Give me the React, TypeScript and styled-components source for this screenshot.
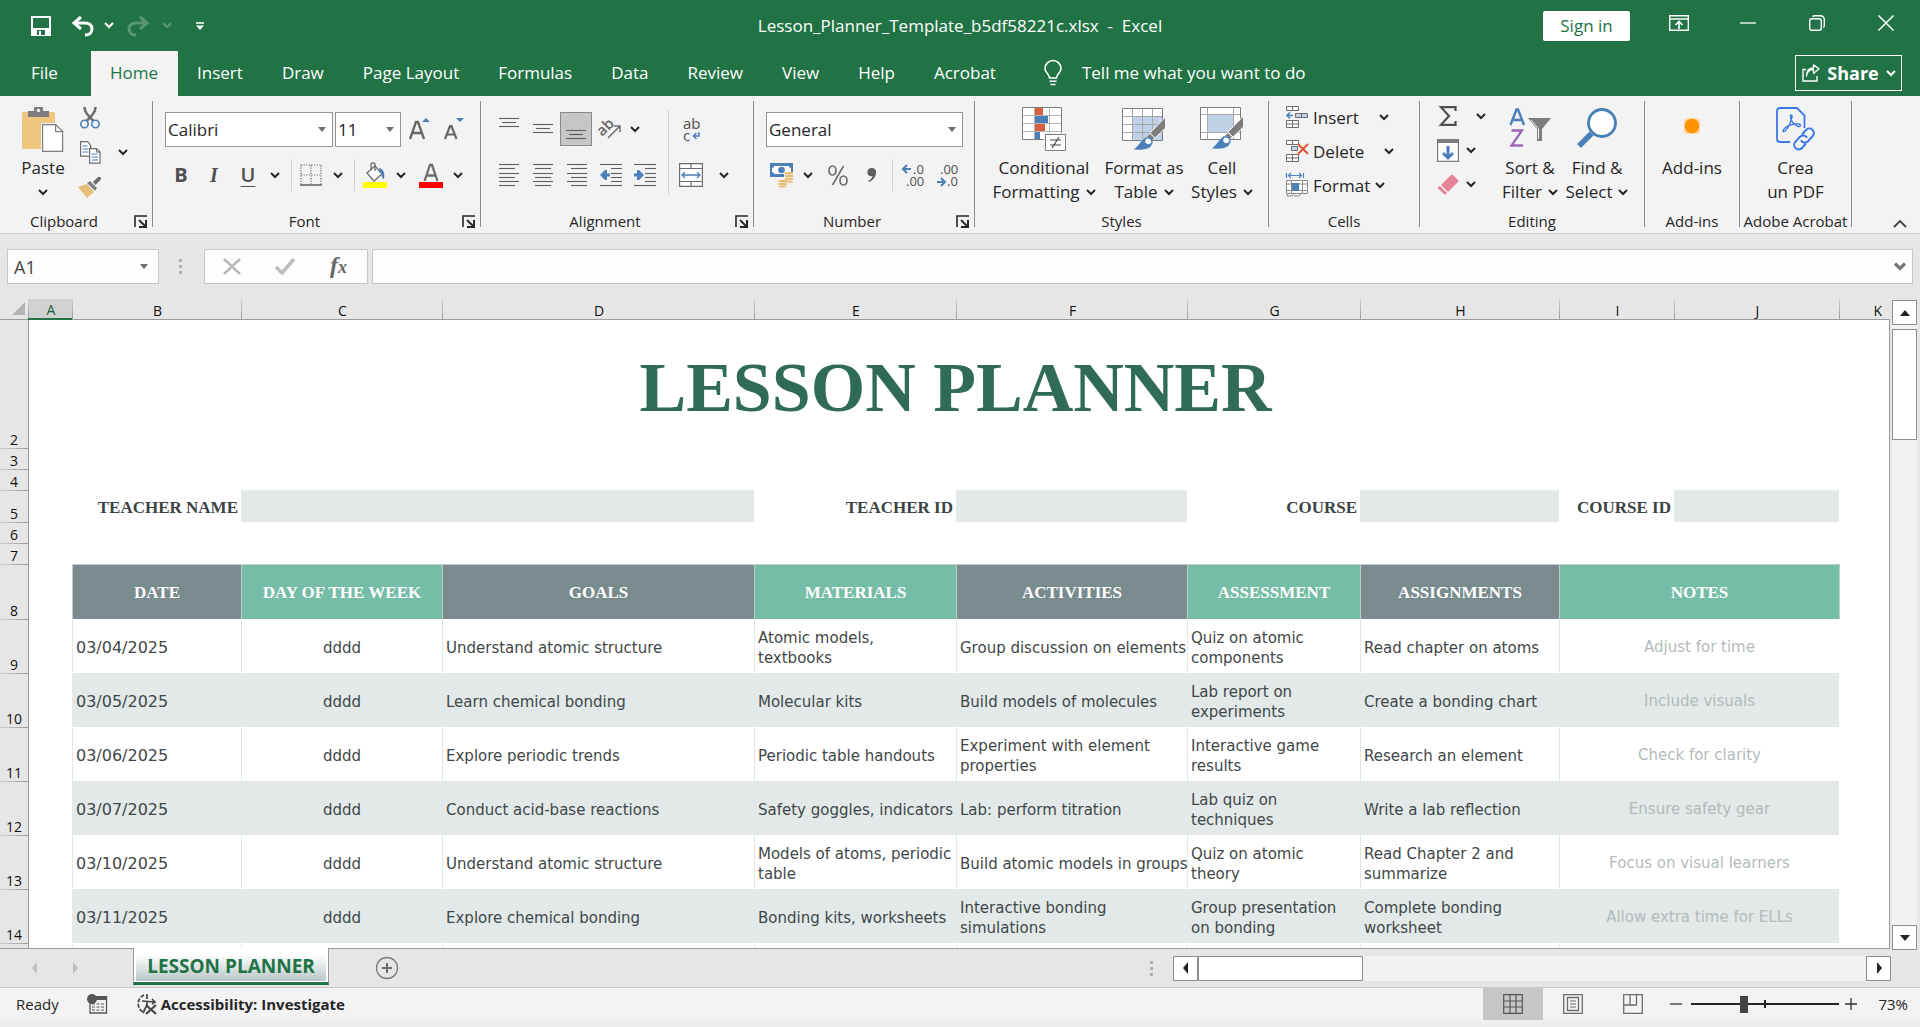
import React from "react";
import styled, { createGlobalStyle, css } from "styled-components";

const UI = `"Open Sans", "Noto Sans", sans-serif`;
const GREEN = "#217346";
const GREY = "#6d6d6d";
const BLUE = "#4a7fb8";

const GlobalStyle = createGlobalStyle`
  *, *::before, *::after { box-sizing: border-box; }
  html, body { margin: 0; padding: 0; overflow: hidden; }
  body { font-family: ${UI}; color: #262626; background: #e6e6e6; }
  button, input, select { font-family: inherit; color: inherit; margin: 0; }
  svg { display: block; flex: none; overflow: visible; }
`;

const Window = styled.div`
  display: flex;
  flex-direction: column;
  height: 100vh;
`;

/* ---------- title bar ---------- */

const TitleBar = styled.header`
  display: grid;
  grid-template-columns: 1fr auto 1fr;
  height: 51px;
  background: ${GREEN};
  color: #fff;
`;

const QuickAccess = styled.div`
  display: flex;
  align-items: center;
  padding-left: 20px;
`;

const PlainButton = styled.button<{ $w?: number; $dim?: boolean }>`
  display: flex;
  align-items: center;
  justify-content: center;
  flex: none;
  width: ${(p) => (p.$w ? `${p.$w}px` : "auto")};
  height: 34px;
  padding: 0;
  border: 0;
  background: none;
  opacity: ${(p) => (p.$dim ? 0.25 : 1)};
`;

const DocTitle = styled.h1`
  margin: 0;
  font-size: 17px;
  font-weight: 400;
  line-height: 51px;
  white-space: pre;
`;

const WindowActions = styled.div`
  display: flex;
  align-items: center;
  justify-content: flex-end;
`;

const WindowButton = styled(PlainButton)`
  width: 69px;
  height: 46px;
  align-self: flex-start;
`;

const SignIn = styled.button`
  width: 87px;
  height: 30px;
  margin-right: 14px;
  padding: 0;
  border: 0;
  border-radius: 2px;
  background: #fff;
  color: ${GREEN};
  font-size: 17px;
  line-height: 30px;
`;

/* ---------- ribbon tabs ---------- */

const TabBar = styled.nav`
  display: flex;
  height: 45px;
  background: ${GREEN};
  color: #fff;
`;

const RibbonTab = styled.button<{ $active?: boolean; $file?: boolean }>`
  padding: 0 20px 2px 19px;
  border: 0;
  background: ${(p) => (p.$active ? "#f3f3f3" : "none")};
  color: ${(p) => (p.$active ? GREEN : "#fff")};
  font-size: 17px;
  white-space: nowrap;
  ${(p) => p.$file && css`width: 91px; padding-left: 31px; text-align: left;`}
`;

const TellMe = styled.button`
  display: flex;
  align-items: center;
  gap: 20px;
  padding: 0 0 2px 28px;
  border: 0;
  background: none;
  font-size: 17px;
  white-space: nowrap;
`;

const Share = styled.button`
  display: flex;
  align-items: center;
  justify-content: space-between;
  width: 107px;
  height: 36px;
  margin: 4px 18px 0 auto;
  padding: 0 5px 0 6px;
  border: 1px solid #fff;
  background: none;
  font-size: 18px;
  font-weight: 700;
`;

/* ---------- ribbon ---------- */

const Ribbon = styled.div`
  display: flex;
  height: 138px;
  flex: none;
  background: #f3f3f3;
  border-bottom: 1px solid #d0d0d0;
`;

const GroupBox = styled.section<{ $w: number }>`
  display: flex;
  flex-direction: column;
  width: ${(p) => p.$w}px;
  flex: none;
`;

const GroupBody = styled.div<{ $pad?: number }>`
  display: flex;
  flex: 1;
  padding-left: ${(p) => p.$pad ?? 0}px;
`;

const GroupFooter = styled.footer`
  display: flex;
  align-items: center;
  height: 22px;
  margin-bottom: 1px;
  font-size: 15px;
  white-space: nowrap;
`;

const GroupLabel = styled.span`
  flex: 1;
  text-align: center;
`;

const Divider = styled.div`
  width: 1px;
  margin: 5px 0 6px;
  background: #8a8a8a;
  flex: none;
`;

const ThinRule = styled.div<{ $h?: number; $m?: string }>`
  width: 1px;
  height: ${(p) => p.$h ?? 32}px;
  margin: ${(p) => p.$m ?? "0 6px"};
  background: #d0d0d0;
  flex: none;
`;

const Stack = styled.div<{ $top?: number; $gap?: number }>`
  display: flex;
  flex-direction: column;
  padding-top: ${(p) => p.$top ?? 16}px;
  gap: ${(p) => p.$gap ?? 12}px;
`;

const Line = styled.div<{ $gap?: number }>`
  display: flex;
  align-items: center;
  height: 34px;
  gap: ${(p) => p.$gap ?? 0}px;
`;

const Tool = styled(PlainButton)<{ $on?: boolean }>`
  ${(p) => p.$on && css`background: #c6c6c6; border: 1px solid #8a8a8a;`}
`;

const Glyph = styled.span<{ $style: "bold" | "italic" | "underline" }>`
  color: #505050;
  font-size: 20px;
  line-height: 24px;
  font-weight: ${(p) => (p.$style === "underline" ? 600 : 700)};
  font-style: ${(p) => (p.$style === "italic" ? "italic" : "normal")};
  font-family: ${(p) => (p.$style === "italic" ? `"Liberation Serif", serif` : UI)};
  text-decoration: ${(p) => (p.$style === "underline" ? "underline" : "none")};
  text-underline-offset: 4px;
  text-decoration-thickness: 1px;
`;

const BigButton = styled.button<{ $w: number }>`
  display: flex;
  flex-direction: column;
  align-items: center;
  flex: none;
  width: ${(p) => p.$w}px;
  padding: 0;
  border: 0;
  background: none;
  font-size: 17px;
  line-height: 24px;
  white-space: nowrap;
`;

const BigIcon = styled.span`
  display: flex;
  align-items: center;
  justify-content: center;
  height: 60px;
  padding-top: 6px;
`;

const BigLine = styled.span`
  display: flex;
  align-items: center;
  height: 24px;
  gap: 6px;
`;

const CellsTool = styled.button<{ $gap: number }>`
  display: flex;
  align-items: center;
  height: 34px;
  padding: 0;
  border: 0;
  background: none;
  font-size: 17px;
  gap: 5px;
  & > span { padding-right: ${(p) => p.$gap}px; }
`;

const Picker = styled.label<{ $w: number }>`
  display: grid;
  grid-template-columns: 1fr 20px;
  align-items: center;
  width: ${(p) => p.$w}px;
  height: 35px;
  border: 1px solid #949494;
  background: #fff;
  & > select {
    grid-area: 1 / 1 / 2 / 3;
    width: 100%;
    height: 33px;
    padding: 1px 0 0 2px;
    border: 0;
    background: none;
    appearance: none;
    font-size: 17px;
  }
  & > svg { grid-area: 1 / 2; justify-self: center; pointer-events: none; }
`;

const Collapse = styled(PlainButton)`
  align-self: flex-end;
  margin: 0 13px 3px auto;
  height: 14px;
`;

/* ---------- formula bar ---------- */

const FormulaBar = styled.div`
  display: flex;
  height: 65px;
  flex: none;
  padding: 15px 7px;
  background: #e6e6e6;
`;

const BarBox = styled.div<{ $w?: number; $pad?: string }>`
  display: flex;
  align-items: center;
  justify-content: space-between;
  flex: ${(p) => (p.$w ? "none" : 1)};
  width: ${(p) => (p.$w ? `${p.$w}px` : "auto")};
  height: 35px;
  padding: ${(p) => p.$pad ?? "0 9px 0 6px"};
  border: 1px solid #c6c6c6;
  background: #fdfdfd;
  color: #444;
  & + & { margin-left: 4px; }
`;

const BarInput = styled.input`
  flex: 1;
  min-width: 0;
  height: 33px;
  padding: 0;
  border: 0;
  background: none;
  font-size: 18px;
  outline: 0;
`;

const Dots = styled.div<{ $m: string }>`
  width: 3px;
  height: 15px;
  margin: ${(p) => p.$m};
  background: repeating-linear-gradient(#b0b0b0 0 3px, transparent 3px 6px);
`;

/* ---------- worksheet ---------- */

const Workspace = styled.main`
  display: flex;
  flex: 1;
  min-height: 0;
`;

const SheetArea = styled.div`
  flex: 1;
  min-width: 0;
  overflow: hidden;
  background: #fff;
`;

const Grid = styled.table`
  width: 100%;
  table-layout: fixed;
  border-collapse: separate;
  border-spacing: 0;
`;

const ColHead = styled.th<{ $selected?: boolean; $last?: boolean }>`
  height: 21px;
  padding: ${(p) => (p.$last ? "2px 8px 0 0" : "2px 0 0 2px")};
  text-align: ${(p) => (p.$last ? "right" : "center")};
  font-size: 14px;
  font-weight: 400;
  line-height: 17px;
  color: ${(p) => (p.$selected ? "#1b5e38" : "#111")};
  border-bottom: ${(p) => (p.$selected ? `2px solid ${GREEN}` : "1px solid #9b9b9b")};
  background: linear-gradient(#d2d2d2, #9b9b9b) left / 1px 100% no-repeat,
    ${(p) => (p.$selected ? "#d2d2d2" : "#e6e6e6")};
`;

const Corner = styled.th`
  padding: 0 3px 2px 12px;
  border-bottom: 1px solid #9b9b9b;
  background: #e6e6e6;
`;

const Row = styled.tr<{ $h: number; $band?: boolean }>`
  height: ${(p) => p.$h}px;
  --fill: ${(p) => (p.$band ? "#e2e9e8" : "#fff")};
`;

const RowHead = styled.th<{ $first?: boolean }>`
  padding: 0;
  vertical-align: bottom;
  font-size: 14px;
  font-weight: 400;
  line-height: 17px;
  color: #111;
  background: ${(p) =>
    p.$first ? "#e6e6e6" : "linear-gradient(90deg, #cfcfcf, #9b9b9b) top / 100% 1px no-repeat, #e6e6e6"};
`;

const Blank = styled.td<{ $edge?: "left" | "right"; $fill?: boolean }>`
  padding: 0;
  background: ${(p) => (p.$fill ? "#e2e9e8" : "#fff")};
  ${(p) => p.$edge && css`border-${p.$edge}: 1px solid #9b9b9b;`}
`;

const SheetTitle = styled.td`
  padding: 8px 0 0;
  text-align: center;
  font: 700 70px/80px "Liberation Serif", serif;
  color: #306a59;
`;

const FieldLabel = styled.td`
  padding: 4px 3px 0 0;
  text-align: right;
  font: 700 17px/20px "Liberation Serif", serif;
  color: #3b4444;
  white-space: nowrap;
`;

const HeadCell = styled.th<{ $teal?: boolean }>`
  padding: 2px 0 0;
  border-top: 1px solid #c3cccc;
  border-left: 1px solid #c3cccc;
  background: ${(p) => (p.$teal ? "#75bda7" : "#7a8b8d")};
  color: #fff;
  font: 700 17px/20px "Liberation Serif", serif;
  white-space: nowrap;
`;

const HeadEnd = styled(Blank)`
  border-left: 1px solid #c3cccc;
`;

const Cell = styled.td<{ $kind?: "date" | "center" | "note" }>`
  padding: ${(p) => (p.$kind === "note" ? "2px 0 0" : p.$kind === "center" ? "4px 0 0" : "4px 0 0 3px")};
  border-left: 1px solid #e2e8e7;
  background: var(--fill);
  font-family: "DejaVu Sans", Verdana, sans-serif;
  font-size: ${(p) => (p.$kind === "date" ? 16 : 15)}px;
  line-height: 20px;
  color: ${(p) => (p.$kind === "note" ? "#b3bbbb" : "#3f4748")};
  text-align: ${(p) => (p.$kind === "center" || p.$kind === "note" ? "center" : "left")};
  white-space: pre;
`;

/* ---------- scroll bars ---------- */

const VScroll = styled.div`
  display: flex;
  flex-direction: column;
  position: relative;
  z-index: 1;
  width: 30px;
  flex: none;
  margin-bottom: -2px;
  padding: 1px 3px 0 2px;
  background: #e6e6e6;
`;

const Trough = styled.div<{ $row?: boolean }>`
  flex: 1;
  display: flex;
  padding: ${(p) => (p.$row ? "0" : "4px 0 0")};
  background: #f2f2f2;
`;

const Thumb = styled.div<{ $w: number; $h: number }>`
  width: ${(p) => p.$w}px;
  height: ${(p) => p.$h}px;
  background: #fff;
  border: 1px solid #8f8f8f;
`;

const ScrollButton = styled(PlainButton)`
  width: 25px;
  height: 25px;
  background: #fff;
  border: 1px solid #8f8f8f;
`;

/* ---------- sheet tabs ---------- */

const SheetBar = styled.div`
  display: flex;
  height: 40px;
  flex: none;
  background: #e6e6e6;
  border-top: 1px solid #9b9b9b;
  border-bottom: 1px solid #c6c6c6;
`;

const SheetNav = styled.div`
  display: flex;
  align-items: center;
  width: 133px;
  padding-left: 15px;
`;

const SheetTab = styled.button`
  width: 196px;
  height: 37px;
  margin-top: -1px;
  padding: 0 2px 1px;
  border: 1px solid #9b9b9b;
  border-top: 0;
  border-bottom: 3px solid ${GREEN};
  background: linear-gradient(#fff 20%, #b9c6c7) content-box, #fff;
  color: ${GREEN};
  font-size: 19px;
  font-weight: 700;
  line-height: 33px;
  white-space: nowrap;
  & > span { display: block; padding-top: 3px; line-height: 30px; }
`;

const AddSheet = styled(PlainButton)`
  height: 38px;
  margin-left: 46px;
`;

const HScroll = styled.div`
  display: flex;
  align-items: center;
  margin: 0 29px 0 auto;
  width: 741px;
`;

const HTrack = styled.div`
  display: flex;
  flex: 1;
  height: 25px;
`;

/* ---------- status bar ---------- */

const StatusBar = styled.footer`
  display: flex;
  align-items: center;
  height: 32px;
  flex: none;
  padding: 0 12px 0 16px;
  background: #f3f3f3;
  font-size: 15px;
`;

const StatusButton = styled.button`
  display: flex;
  align-items: center;
  gap: 3px;
  margin-left: 28px;
  padding: 0;
  border: 0;
  background: none;
  font-size: 15px;
  font-weight: 700;
`;

const ViewButtons = styled.div`
  display: flex;
  margin-left: auto;
`;

const ViewButton = styled(PlainButton)<{ $on?: boolean }>`
  width: 60px;
  height: 32px;
  background: ${(p) => (p.$on ? "#c6c6c6" : "none")};
`;

const Zoom = styled.div`
  display: flex;
  align-items: center;
  padding-left: 1px;
`;

const ZoomRange = styled.input`
  appearance: none;
  width: 148px;
  height: 18px;
  margin-left: 3px;
  background: linear-gradient(#262626, #262626) 50% 50% / 2px 8px no-repeat,
    linear-gradient(#262626, #262626) center / 100% 2px no-repeat;
  &::-webkit-slider-thumb {
    appearance: none;
    width: 8px;
    height: 17px;
    background: #444;
  }
`;

const ZoomValue = styled.span`
  width: 45px;
  text-align: right;
`;

const BottomEdge = styled.div`
  height: 7px;
  flex: none;
  background: #eee;
`;

/* ---------- icons ---------- */

type IcoProps = { w: number; h: number; children: React.ReactNode };
const Ico = ({ w, h, children }: IcoProps) => (
  <svg width={w} height={h} viewBox={`0 0 ${w} ${h}`} fill="none" aria-hidden="true">
    {children}
  </svg>
);

const Chevron = ({ color = "#262626" }: { color?: string }) => (
  <Ico w={10} h={7}>
    <path d="M1 1l4 4 4-4" stroke={color} strokeWidth="2" />
  </Ico>
);

const Caret = () => (
  <Ico w={9} h={5}>
    <path d="M0 0h8L4 5z" fill="#6d6d6d" />
  </Ico>
);

const Arrow = ({ dir, color = "#222" }: { dir: "up" | "down" | "left" | "right"; color?: string }) => {
  const shapes = {
    up: "M1 9l5-6 5 6z",
    down: "M1 3h10L6 9z",
    left: "M8 0v12L3 6z",
    right: "M4 0v12l5-6z",
  };
  return (
    <Ico w={12} h={12}>
      <path d={shapes[dir]} fill={color} />
    </Ico>
  );
};

const Launcher = () => (
  <Ico w={13} h={13}>
    <path d="M1 12V1h12" stroke="#262626" strokeWidth="1.6" />
    <path d="M5 5l6 6" stroke="#262626" strokeWidth="1.8" />
    <path d="M12 5v7H5" stroke="#262626" strokeWidth="2" />
  </Ico>
);

const SaveIcon = () => (
  <Ico w={20} h={20}>
    <path d="M1 1h18v18H1z" stroke="#fff" strokeWidth="2" />
    <path d="M1 12h18v7H1z" fill="#fff" />
    <path d="M6 14h8v5H6z" fill={GREEN} />
    <path d="M8 15h2v4H8z" fill="#fff" />
  </Ico>
);

const UndoIcon = () => (
  <Ico w={22} h={20}>
    <path d="M9 1L2 7l7 6" stroke="#fff" strokeWidth="3" />
    <path d="M3 7h10c4 0 7 2 7 6s-3 6-7 6" stroke="#fff" strokeWidth="3" />
  </Ico>
);

const RedoIcon = () => (
  <Ico w={22} h={20}>
    <path d="M13 1l7 6-7 6" stroke="#fff" strokeWidth="3" />
    <path d="M19 7H9c-4 0-7 2-7 6s3 6 7 6" stroke="#fff" strokeWidth="3" />
  </Ico>
);

const CustomizeIcon = () => (
  <Ico w={8} h={8}>
    <path d="M0 1h8" stroke="#fff" strokeWidth="1.5" />
    <path d="M0 3.500h8L4 8z" fill="#fff" />
  </Ico>
);

const RibbonOptionsIcon = () => (
  <Ico w={20} h={16}>
    <path d="M.7.7h18.600v14.600H.7zM1 4h18" stroke="#fff" strokeWidth="1.4" />
    <path d="M10 14V7M6.500 10L10 6.500l3.500 3.500" stroke="#fff" strokeWidth="1.6" />
  </Ico>
);

const MinimizeIcon = () => (
  <Ico w={16} h={2}>
    <path d="M0 1h16" stroke="#fff" strokeWidth="1.3" />
  </Ico>
);

const RestoreIcon = () => (
  <Ico w={16} h={16}>
    <rect x=".7" y="3.7" width="11.6" height="11.6" rx="2" stroke="#fff" strokeWidth="1.4" />
    <path d="M3.500 1.500C4 1 4.500.7 5.500.7h6a3.800 3.800 0 013.800 3.800v6c0 1-.3 1.500-.8 2" stroke="#fff" strokeWidth="1.4" />
  </Ico>
);

const CloseIcon = () => (
  <Ico w={16} h={16}>
    <path d="M.5.5l15 15M15.500.5l-15 15" stroke="#fff" strokeWidth="1.5" />
  </Ico>
);

const BulbIcon = () => (
  <Ico w={18} h={26}>
    <path d="M5.500 18c0-4-4.500-5-4.500-9.500a8 8 0 0116 0c0 4.500-4.500 5.500-4.500 9.500z" stroke="#fff" strokeWidth="1.6" />
    <path d="M5.500 21.200h7M6.500 24.500h5" stroke="#fff" strokeWidth="1.6" />
  </Ico>
);

const ShareIcon = () => (
  <Ico w={18} h={18}>
    <path d="M4 5.500H1V17h14v-5" stroke="#fff" strokeWidth="1.4" />
    <path d="M4.500 12c.5-4 3-6.500 7-6.500V9.500L17 4.800 11.500.9v3C7 4 4.500 7 4.500 12z" stroke="#fff" strokeWidth="1.3" strokeLinejoin="round" />
  </Ico>
);

const PasteIcon = () => (
  <Ico w={42} h={46}>
    <rect x="0" y="6" width="33" height="37" rx="1.5" fill="#edc77e" />
    <path d="M6 5h6V2q0-1 1-1h7q1 0 1 1v3h6v6H6z" fill="#7d7d7d" />
    <circle cx="16.5" cy="4.5" r="1.7" fill="#f3f3f3" />
    <path d="M19 17h18v29H19z" fill="#f3f3f3" />
    <path d="M20.600 18.600h13l7 7v19.800h-20z" fill="#fff" stroke="#7d7d7d" strokeWidth="1.2" />
    <path d="M33.600 18.600v7h7" stroke="#7d7d7d" strokeWidth="1.2" />
  </Ico>
);

const CutIcon = () => (
  <Ico w={20} h={23}>
    <path d="M4.500 1c0 5 3 8 9 14M15.500 1c0 5-3 8-9 14" stroke="#6d6d6d" strokeWidth="2.6" />
    <circle cx="4.5" cy="18" r="3.7" stroke={BLUE} strokeWidth="1.6" />
    <circle cx="15.5" cy="18" r="3.7" stroke={BLUE} strokeWidth="1.6" />
  </Ico>
);

const CopyIcon = () => (
  <Ico w={21} h={23}>
    <path d="M.6.6h7l3 3.500v11H.6z" fill="#fff" stroke="#6d6d6d" strokeWidth="1.2" />
    <path d="M2.500 5h5M2.500 8h6M2.500 11h6" stroke={BLUE} />
    <path d="M9.600 7.600h7l3.400 3.500v11H9.600z" fill="#fff" stroke="#6d6d6d" strokeWidth="1.2" />
    <path d="M16.600 7.600v3.500H20" stroke="#6d6d6d" />
    <path d="M11.500 13h6M11.500 16h6.500M11.500 19h6.500" stroke={BLUE} />
  </Ico>
);

const PainterIcon = () => (
  <Ico w={24} h={22}>
    <path d="M0 11l9-3 7 8-7 6z" fill="#e8bd78" />
    <path d="M9 7l3-2 7 7-2 3z" fill="#7d7d7d" />
    <path d="M15 6l5-5q2-1 3 1 0 1-.5 2l-5 5z" fill="#6d6d6d" />
  </Ico>
);

const FontSizeIcon = ({ grow }: { grow?: boolean }) => (
  <Ico w={22} h={24}>
    {grow ? (
      <path d="M1 22L7 5h2l6 17M3.500 16h9" stroke="#666" strokeWidth="2.3" />
    ) : (
      <path d="M2 22L7 9h1.500l5 13M4 17.500h7.500" stroke="#666" strokeWidth="2.2" />
    )}
    <path d={grow ? "M13 5h8l-4-4z" : "M13 1h8l-4 4z"} fill={BLUE} />
  </Ico>
);

const BordersIcon = () => (
  <Ico w={22} h={22}>
    <path d="M1 1h20M1 11h20M1 1v20M11 1v20M21 1v20" stroke="#6d6d6d" strokeWidth="1.2" strokeDasharray="1.2 1.4" />
    <path d="M0 21h22" stroke="#555" strokeWidth="1.4" />
  </Ico>
);

const BucketIcon = () => (
  <Ico w={24} h={26}>
    <path d="M4 11l8-7 7 8-8 7z" fill="#fff" stroke="#6d6d6d" strokeWidth="1.3" />
    <path d="M8 8V2q2-2.500 4 0v7" stroke="#6d6d6d" strokeWidth="1.4" />
    <path d="M16 6c5 1 6 6 5 11-2 0-2-3-3-5z" fill={BLUE} />
    <path d="M0 20h24v6H0z" fill="#ffff00" />
  </Ico>
);

const FontColorIcon = () => (
  <Ico w={24} h={26}>
    <path d="M5.500 19L11 3h2l5.500 16M8 13.500h8" stroke="#6d6d6d" strokeWidth="2.3" />
    <path d="M0 20h24v6H0z" fill="#ff0000" />
  </Ico>
);

type Bar = [number, number, number];
const bars = (rows: Bar[]) =>
  rows.map(([x1, x2, y], i) => <path key={i} d={`M${x1} ${y}.5H${x2}`} stroke="#5f5f5f" strokeWidth="1.1" />);

const VAlignIcon = ({ shift }: { shift: number }) => (
  <Ico w={20} h={24}>
    {bars([
      [0, 20, shift],
      [3, 17, shift + 4],
      [0, 20, shift + 8],
    ])}
  </Ico>
);

const HAlignIcon = ({ kind }: { kind: "left" | "center" | "right" }) => {
  const start = { left: 0, center: 2, right: 4 }[kind];
  return (
    <Ico w={20} h={22}>
      {bars([
        [0, 20, 0],
        [start, start + 16, 4],
        [0, 20, 9],
        [start, start + 16, 13],
        [0, 20, 17],
        [start, start + 16, 21],
      ])}
    </Ico>
  );
};

const IndentIcon = ({ out }: { out?: boolean }) => (
  <Ico w={22} h={22}>
    {bars([
      [0, 22, 0],
      [11, 22, 4],
      [11, 22, 9],
      [11, 22, 13],
      [11, 22, 17],
      [0, 22, 21],
    ])}
    <path
      d={out ? "M0 11l5-5h2v3.500h3v3H7V16H5z" : "M10 11L5 6H3v3.500H0v3h3V16h2z"}
      fill={BLUE}
    />
  </Ico>
);

const OrientIcon = () => (
  <Ico w={22} h={22}>
    <g transform="rotate(-45 8 12)">
      <text x="-1" y="13" fontSize="15" fontWeight="600" fontFamily={UI} fill="#666">ab</text>
    </g>
    <path d="M8 20L20 8M14 8h6v6" stroke="#6d6d6d" strokeWidth="1.5" />
  </Ico>
);

const WrapIcon = () => (
  <Ico w={20} h={24}>
    <text x="2" y="12" fontSize="15" fontFamily={UI} fill="#505050">ab</text>
    <text x="2" y="24" fontSize="15" fontFamily={UI} fill="#505050">c</text>
    <path d="M18 15v4h-5M15.500 16l-3 3 3 3" stroke={BLUE} strokeWidth="1.5" />
  </Ico>
);

const MergeIcon = () => (
  <Ico w={24} h={24}>
    <path d="M.6.6h22.800v22.800H.6z" fill="#fff" stroke="#6d6d6d" strokeWidth="1.2" />
    <path d="M.6 5.500h22.800M.6 18.500h22.800M12 .6v5M12 18.500v5" stroke="#6d6d6d" strokeWidth="1.2" />
    <path d="M3 12h18M6 9l-3 3 3 3M18 9l3 3-3 3" stroke={BLUE} strokeWidth="1.3" />
  </Ico>
);

const MoneyIcon = () => (
  <Ico w={24} h={24}>
    <path d="M0 0h23v14H0z" fill={BLUE} />
    <path d="M4 3h15q0 2 2 2v4q-2 0-2 2H4q0-2-2-2V5q2 0 2-2z" fill="#fff" />
    <circle cx="11.5" cy="7" r="3.3" fill={BLUE} />
    <rect x="14" y="9" width="10" height="10" fill="#f3f3f3" />
    <rect x="8" y="17" width="9" height="7" fill="#f3f3f3" />
    {[10, 13, 16].map((y) => <ellipse key={y} cx="19" cy={y} rx="4.5" ry="1.3" fill="#e8bd78" />)}
    {[18, 21].map((y) => <ellipse key={y} cx="12.5" cy={y} rx="4.5" ry="1.3" fill="#e8bd78" />)}
    <ellipse cx="19" cy="18.7" rx="4" ry="1" fill="#e8bd78" />
    <ellipse cx="12.5" cy="23.5" rx="4" ry="1" fill="#e8bd78" />
  </Ico>
);

const PercentIcon = () => (
  <Ico w={20} h={21}>
    <ellipse cx="4.5" cy="5.5" rx="3.5" ry="4.5" stroke="#6d6d6d" strokeWidth="1.7" />
    <ellipse cx="15.5" cy="15.5" rx="3.5" ry="4.5" stroke="#6d6d6d" strokeWidth="1.7" />
    <path d="M15.500 1L4.500 20" stroke="#6d6d6d" strokeWidth="1.6" />
  </Ico>
);

const CommaIcon = () => (
  <Ico w={10} h={14}>
    <path d="M4.500 0C8 0 9.500 2.200 9 5.500 8.500 9 6 12.500 2 14l-.7-1.200C4 11.300 5.300 9.800 5.500 8 2.500 8.700.3 7 .3 4.200.3 2 2 0 4.500 0z" fill="#5f5f5f" />
  </Ico>
);

const DecimalIcon = ({ more }: { more?: boolean }) => (
  <Ico w={24} h={24}>
    <text x={more ? 11 : 4} y="11" fontSize="13" fontFamily={UI} fill="#505050">{more ? ".0" : ".00"}</text>
    <text x={more ? 4 : 11} y="23" fontSize="13" fontFamily={UI} fill="#505050">{more ? ".00" : ".0"}</text>
    {more ? (
      <path d="M9 6H1M5 2L1 6l4 4" stroke={BLUE} strokeWidth="2" />
    ) : (
      <path d="M1 19h8M5 15l4 4-4 4" stroke={BLUE} strokeWidth="2" />
    )}
  </Ico>
);

const ConditionalIcon = () => (
  <Ico w={44} h={44}>
    <path d="M.5.5h39v32H.5z" fill="#fff" />
    <path d="M1 8.500h38M1 16.500h38M1 24.500h38M12.500 1v31M27.500 1v31" stroke="#b5b5b5" />
    <path d="M13 1h8v7h-8zM13 17h10v7H13z" fill="#d65f3c" />
    <path d="M13 9h13v7H13zM13 25h5v7h-5z" fill={BLUE} />
    <path d="M.5.5h39v32H.5z" stroke="#7d7d7d" />
    <path d="M22 26h22v18H22z" fill="#f3f3f3" />
    <path d="M23.500 27.500h20v16h-20z" fill="#fff" stroke="#7d7d7d" />
    <path d="M28 33h11M28 38h11M37 30l-7 11" stroke="#444" strokeWidth="1.2" />
  </Ico>
);

const BrushPart = () => (
  <g>
    <path d="M43.500 9v11L33 30l-5-5z" fill="#7d7d7d" stroke="#f3f3f3" />
    <path d="M28 26l4 4-3 3-4-4z" fill="#7d7d7d" />
    <path d="M11 41.500c6-3 8-11 13-12 5 0 8 5 5 9-4 4-12 4-18 3z" fill={BLUE} stroke="#f3f3f3" strokeWidth=".6" />
    <path d="M24 30q6-1 6 5-3 3-6 1t0-6z" fill="#fff" stroke={BLUE} strokeWidth="1.3" />
  </g>
);

const FormatTableIcon = () => (
  <Ico w={44} h={42}>
    <path d="M.5.5h40v32H.5z" fill="#fff" />
    <path d="M11 9h29v24H11z" fill="#c0d2e8" />
    <path d="M1 8.500h39M1 16.500h39M1 24.500h39M10.500 1v31M20.500 1v31M30.500 1v31" stroke="#a8a8a8" />
    <path d="M.5.5h40v32H.5z" stroke="#7d7d7d" />
    <BrushPart />
  </Ico>
);

const CellStylesIcon = () => (
  <Ico w={44} h={44}>
    <path d="M.5.5h40v32H.5z" fill="#fff" />
    <path d="M8 8h26v17H8z" fill="#c0d2e8" />
    <path d="M1 7.500h39M1 25.500h39M7.500 1v31M33.500 1v31" stroke="#a8a8a8" />
    <path d="M.5.5h40v32H.5z" stroke="#7d7d7d" />
    <BrushPart />
  </Ico>
);

const InsertIcon = () => (
  <Ico w={22} h={22}>
    <path d="M.5.5h12v4H.5zM6.500.5v4M.5 14.500h12v7H.5zM6.500 14.500v7M.5 18h12" stroke="#6d6d6d" fill="#fff" />
    <path d="M9.500 7.500h12v4h-12zM15.500 7.500v4" stroke="#6d6d6d" fill="#c0d2e8" />
    <path d="M7 9.500H1M4 6.500l-3 3 3 3" stroke={BLUE} strokeWidth="1.6" />
  </Ico>
);

const DeleteIcon = () => (
  <Ico w={22} h={22}>
    <path d="M.5.5h12v4H.5zM6.500.5v4M.5 14.500h12v7H.5zM6.500 14.500v7M.5 18h12" stroke="#6d6d6d" fill="#fff" />
    <path d="M5.500 6.500h6v4h-6z" stroke="#6d6d6d" fill="#c0d2e8" />
    <path d="M12 4l10 10M22 4L12 14" stroke="#d8552f" strokeWidth="2" />
  </Ico>
);

const FormatIcon = () => (
  <Ico w={22} h={24}>
    <path d="M.5 0v5M17.500 0v5M2 2.500h14M5 0L2.500 2.500 5 5M13 0l2.500 2.500L13 5" stroke={BLUE} strokeWidth="1.2" />
    <path d="M.5 7.500h21v13H.5zM5.500 7.500v13M16.500 7.500v13M.5 11h21M.5 17.500h21" stroke="#8a8a8a" fill="#fff" />
    <path d="M6 10h7v8H6z" fill={BLUE} />
    <path d="M1 21v2h5l2-2M8 23h5l2-2" stroke="#8a8a8a" />
  </Ico>
);

const SumIcon = () => (
  <Ico w={18} h={20}>
    <path d="M16.500 5V1.200H2L10 10l-8 8.800h14.500V15" stroke="#505050" strokeWidth="2.2" />
  </Ico>
);

const FillIcon = () => (
  <Ico w={22} h={23}>
    <path d="M.6.6h20.800v21.800H.6z" fill="#fff" stroke="#7d7d7d" strokeWidth="1.2" />
    <path d="M0 0h22v4H0z" fill="#7d7d7d" />
    <path d="M11 7v12M6 14l5 5 5-5" stroke={BLUE} strokeWidth="3" />
  </Ico>
);

const EraserIcon = () => (
  <Ico w={22} h={21}>
    <path d="M4 11L14 1q1-1 2 0l5 5q1 1 0 2L11 18z" fill="#e58497" />
    <path d="M3 12l7 7-1 1q-1 1-2 0L1 14.500q-1-1 0-1.500z" fill="#e58497" />
  </Ico>
);

const SortIcon = () => (
  <Ico w={42} h={42}>
    <path d="M1.500 17L7.500 1.500h1.500L15 17M4 12h9" stroke={BLUE} strokeWidth="2.4" />
    <path d="M2.500 22.500h10.500L2.500 37.500h11.500" stroke="#9a67b8" strokeWidth="2.3" />
    <path d="M19 10h23L33 21v12h-5V21z" fill="#7d7d7d" />
    <path d="M22 12l7.500 9v10" stroke="#f3f3f3" />
  </Ico>
);

const FindIcon = () => (
  <Ico w={42} h={42}>
    <circle cx="26" cy="15" r="13.5" fill="#fff" stroke={BLUE} strokeWidth="2.8" />
    <path d="M15.500 25.500L3 38" stroke={BLUE} strokeWidth="5.500" />
  </Ico>
);

const AddinDot = () => (
  <Ico w={18} h={24}>
    <rect x="1" y="1" width="16" height="16" rx="4" fill="#ffd9a0" />
    <circle cx="9" cy="9" r="7.3" fill="#ff9200" />
  </Ico>
);

const AcrobatIcon = () => (
  <Ico w={40} h={44}>
    <path d="M14 35H4q-3 0-3-3V4q0-3 3-3h17l7.500 7.500V21" stroke="#3b78e7" strokeWidth="1.8" />
    <path d="M7 24c1-4 9-8 16-7 3 1 1 3-1 2.500C18 18 14 13 14.500 9c.5-2 2-1 1.500 1-.5 4-4 12-7 14-1 .8-2 1-2 0z" stroke="#3b78e7" strokeWidth="1.4" />
    <g stroke="#3b78e7" strokeWidth="2" transform="rotate(-48 28 32)">
      <path d="M26 36.500h-6a4.500 4.500 0 010-9h7a4.500 4.500 0 014 6" />
      <path d="M30 27.500h6a4.500 4.500 0 010 9h-7a4.500 4.500 0 01-4-6" />
    </g>
  </Ico>
);

const MacroIcon = () => (
  <Ico w={21} h={20}>
    <path d="M3 3h16.500v16H3z" stroke="#555" strokeWidth="1.3" />
    <path d="M9 2h11v4H9z" fill="#555" />
    <path d="M5 10h3M9.500 10h3M14 10h3M5 13h3M9.500 13h3M14 13h3M5 16h3M9.500 16h3M14 16h3" stroke="#555" strokeWidth="1.2" />
    <circle cx="5" cy="5" r="5" fill="#555" />
  </Ico>
);

const AccessIcon = () => (
  <Ico w={22} h={22}>
    <path d="M8 2a9.500 9.500 0 00-1 17" stroke="#444" strokeWidth="1.7" strokeDasharray="4 1.5" />
    <path d="M11 1v5M6 8l13 1M16 6l3 3-3 2M11 8v4l-4 8" stroke="#444" strokeWidth="1.7" />
    <path d="M10 12l10 9M20 12L10 21" stroke="#444" strokeWidth="2.2" />
  </Ico>
);

const NormalViewIcon = () => (
  <Ico w={20} h={20}>
    <path d="M.7.7h18.600v18.600H.7zM.7 7h18.600M.7 13h18.600M7 .7v18.600M13 .7v18.600" stroke="#555" strokeWidth="1.2" />
  </Ico>
);

const PageViewIcon = () => (
  <Ico w={20} h={20}>
    <path d="M.7.7h18.600v18.600H.7zM4.500 3.500h11v13h-11z" stroke={GREY} strokeWidth="1.3" />
    <path d="M7 7h6M7 10h6M7 13h6" stroke={GREY} strokeWidth="1.2" />
  </Ico>
);

const BreakViewIcon = () => (
  <Ico w={20} h={20}>
    <path d="M.7.7h18.600v18.600H.7zM.7 11h12.800V.7M7 .7V11" stroke={GREY} strokeWidth="1.3" />
  </Ico>
);

/* ---------- data ---------- */

const TABS = ["Insert", "Draw", "Page Layout", "Formulas", "Data", "Review", "View", "Help", "Acrobat"];

const COLUMNS = [
  { name: "A", width: 44 },
  { name: "B", width: 169 },
  { name: "C", width: 201 },
  { name: "D", width: 312 },
  { name: "E", width: 202 },
  { name: "F", width: 231 },
  { name: "G", width: 173 },
  { name: "H", width: 199 },
  { name: "I", width: 115 },
  { name: "J", width: 165 },
];

const HEADINGS = ["DATE", "DAY OF THE WEEK", "GOALS", "MATERIALS", "ACTIVITIES", "ASSESSMENT", "ASSIGNMENTS"];

const LESSONS = [
  ["03/04/2025", "Understand atomic structure", "Atomic models,\ntextbooks", "Group discussion on elements", "Quiz on atomic\ncomponents", "Read chapter on atoms", "Adjust for time"],
  ["03/05/2025", "Learn chemical bonding", "Molecular kits", "Build models of molecules", "Lab report on\nexperiments", "Create a bonding chart", "Include visuals"],
  ["03/06/2025", "Explore periodic trends", "Periodic table handouts", "Experiment with element\nproperties", "Interactive game\nresults", "Research an element", "Check for clarity"],
  ["03/07/2025", "Conduct acid-base reactions", "Safety goggles, indicators", "Lab: perform titration", "Lab quiz on\ntechniques", "Write a lab reflection", "Ensure safety gear"],
  ["03/10/2025", "Understand atomic structure", "Models of atoms, periodic\ntable", "Build atomic models in groups", "Quiz on atomic\ntheory", "Read Chapter 2 and\nsummarize", "Focus on visual learners"],
  ["03/11/2025", "Explore chemical bonding", "Bonding kits, worksheets", "Interactive bonding\nsimulations", "Group presentation\non bonding", "Complete bonding\nworksheet", "Allow extra time for ELLs"],
];

/* ---------- parts ---------- */

type GroupProps = { label: string; w: number; pad?: number; launcher?: boolean; children: React.ReactNode };
const Group = ({ label, w, pad, launcher, children }: GroupProps) => (
  <>
    <GroupBox $w={w} aria-label={label}>
      <GroupBody $pad={pad}>{children}</GroupBody>
      <GroupFooter>
        <GroupLabel>{label}</GroupLabel>
        {launcher && (
          <PlainButton $w={24} aria-label={`${label} settings`}>
            <Launcher />
          </PlainButton>
        )}
      </GroupFooter>
    </GroupBox>
    <Divider />
  </>
);

const Drop = ({ w, label }: { w: number; label: string }) => (
  <PlainButton $w={w} aria-label={label}>
    <Chevron />
  </PlainButton>
);

type BigProps = { w: number; icon: React.ReactNode; lines: string[]; drop?: boolean };
const Big = ({ w, icon, lines, drop }: BigProps) => (
  <BigButton $w={w}>
    <BigIcon>{icon}</BigIcon>
    {lines.map((text, i) => (
      <BigLine key={text}>
        {text}
        {drop && i === lines.length - 1 && <Chevron />}
      </BigLine>
    ))}
  </BigButton>
);

const RibbonPanel = () => (
  <Ribbon>
    <Group label="Clipboard" w={152} pad={8} launcher>
      <BigButton $w={70}>
        <BigIcon><PasteIcon /></BigIcon>
        <BigLine>Paste</BigLine>
        <BigLine><Chevron /></BigLine>
      </BigButton>
      <Stack $top={4} $gap={1}>
        <Line><Tool $w={24} aria-label="Cut"><CutIcon /></Tool></Line>
        <Line>
          <Tool $w={24} aria-label="Copy"><CopyIcon /></Tool>
          <Drop w={42} label="Copy options" />
        </Line>
        <Line><Tool $w={24} aria-label="Format painter"><PainterIcon /></Tool></Line>
      </Stack>
    </Group>

    <Group label="Font" w={327} pad={12} launcher>
      <Stack>
        <Line $gap={2}>
          <Picker $w={168}>
            <select aria-label="Font name"><option>Calibri</option></select>
            <Caret />
          </Picker>
          <Picker $w={66}>
            <select aria-label="Font size"><option>11</option></select>
            <Caret />
          </Picker>
          <Tool $w={34} aria-label="Increase font size"><FontSizeIcon grow /></Tool>
          <Tool $w={30} aria-label="Decrease font size"><FontSizeIcon /></Tool>
        </Line>
        <Line>
          <Tool $w={32} aria-label="Bold"><Glyph $style="bold">B</Glyph></Tool>
          <Tool $w={34} aria-label="Italic"><Glyph $style="italic">I</Glyph></Tool>
          <Tool $w={34} aria-label="Underline"><Glyph $style="underline">U</Glyph></Tool>
          <Drop w={20} label="Underline options" />
          <ThinRule />
          <Tool $w={26} aria-label="Borders"><BordersIcon /></Tool>
          <Drop w={28} label="Border options" />
          <ThinRule $m="0 2px" />
          <Tool $w={36} aria-label="Fill color"><BucketIcon /></Tool>
          <Drop w={16} label="Fill color options" />
          <Tool $w={44} aria-label="Font color"><FontColorIcon /></Tool>
          <Drop w={10} label="Font color options" />
        </Line>
      </Stack>
    </Group>

    <Group label="Alignment" w={272} pad={11} launcher>
      <Stack>
        <Line>
          <Tool $w={34} aria-label="Top align"><VAlignIcon shift={1} /></Tool>
          <Tool $w={34} aria-label="Middle align"><VAlignIcon shift={7} /></Tool>
          <Tool $w={32} $on aria-label="Bottom align"><VAlignIcon shift={13} /></Tool>
          <Tool $w={38} aria-label="Orientation"><OrientIcon /></Tool>
          <Drop w={10} label="Orientation options" />
        </Line>
        <Line>
          <Tool $w={34} aria-label="Align left"><HAlignIcon kind="left" /></Tool>
          <Tool $w={34} aria-label="Center"><HAlignIcon kind="center" /></Tool>
          <Tool $w={34} aria-label="Align right"><HAlignIcon kind="right" /></Tool>
          <Tool $w={34} aria-label="Decrease indent"><IndentIcon out /></Tool>
          <Tool $w={34} aria-label="Increase indent"><IndentIcon /></Tool>
        </Line>
      </Stack>
      <ThinRule $h={85} $m="14px 5px 0 6px" />
      <Stack>
        <Line><Tool $w={34} aria-label="Wrap text"><WrapIcon /></Tool></Line>
        <Line>
          <Tool $w={34} aria-label="Merge and center"><MergeIcon /></Tool>
          <Drop w={32} label="Merge options" />
        </Line>
      </Stack>
    </Group>

    <Group label="Number" w={220} pad={12} launcher>
      <Stack>
        <Line>
          <Picker $w={197}>
            <select aria-label="Number format"><option>General</option></select>
            <Caret />
          </Picker>
        </Line>
        <Line>
          <Tool $w={32} aria-label="Accounting format"><MoneyIcon /></Tool>
          <Drop w={20} label="Currency options" />
          <Tool $w={40} aria-label="Percent style"><PercentIcon /></Tool>
          <Tool $w={28} aria-label="Comma style"><CommaIcon /></Tool>
          <ThinRule $m="0 4px 0 6px" />
          <Tool $w={34} aria-label="Increase decimal"><DecimalIcon more /></Tool>
          <Tool $w={34} aria-label="Decrease decimal"><DecimalIcon /></Tool>
        </Line>
      </Stack>
    </Group>

    <Group label="Styles" w={293} pad={15}>
      <Big w={108} icon={<ConditionalIcon />} lines={["Conditional", "Formatting"]} drop />
      <Big w={92} icon={<FormatTableIcon />} lines={["Format as", "Table"]} drop />
      <Big w={64} icon={<CellStylesIcon />} lines={["Cell", "Styles"]} drop />
    </Group>

    <Group label="Cells" w={150} pad={17}>
      <Stack $top={4} $gap={0}>
        <CellsTool $gap={15}><InsertIcon /><span>Insert</span><Chevron /></CellsTool>
        <CellsTool $gap={15}><DeleteIcon /><span>Delete</span><Chevron /></CellsTool>
        <CellsTool $gap={0}><FormatIcon /><span>Format</span><Chevron /></CellsTool>
      </Stack>
    </Group>

    <Group label="Editing" w={224} pad={10}>
      <Stack $top={3} $gap={0}>
        <Line>
          <Tool $w={36} aria-label="AutoSum"><SumIcon /></Tool>
          <Drop w={30} label="AutoSum options" />
        </Line>
        <Line>
          <Tool $w={36} aria-label="Fill"><FillIcon /></Tool>
          <Drop w={10} label="Fill options" />
        </Line>
        <Line>
          <Tool $w={36} aria-label="Clear"><EraserIcon /></Tool>
          <Drop w={10} label="Clear options" />
        </Line>
      </Stack>
      <Big w={68} icon={<SortIcon />} lines={["Sort &", "Filter"]} drop />
      <Big w={66} icon={<FindIcon />} lines={["Find &", "Select"]} drop />
    </Group>

    <Group label="Add-ins" w={94}>
      <Big w={94} icon={<AddinDot />} lines={["Add-ins"]} />
    </Group>

    <Group label="Adobe Acrobat" w={111}>
      <Big w={111} icon={<AcrobatIcon />} lines={["Crea", "un PDF"]} />
    </Group>

    <Collapse aria-label="Collapse ribbon">
      <Ico w={14} h={9}>
        <path d="M1 8l6-6 6 6" stroke="#444" strokeWidth="1.8" />
      </Ico>
    </Collapse>
  </Ribbon>
);

const Worksheet = () => (
  <SheetArea>
    <Grid>
      <colgroup>
        <col width={28} />
        {COLUMNS.map((c) => <col key={c.name} width={c.width} />)}
        <col />
      </colgroup>
      <thead>
        <tr>
          <Corner aria-label="Select all">
            <Ico w={13} h={13}><path d="M13 0v13H0z" fill="#b4b4b4" /></Ico>
          </Corner>
          {COLUMNS.map((c) => <ColHead key={c.name} $selected={c.name === "A"}>{c.name}</ColHead>)}
          <ColHead $last>K</ColHead>
        </tr>
      </thead>
      <tbody>
        <Row $h={128}>
          <RowHead $first>2</RowHead>
          <Blank $edge="left" />
          <SheetTitle colSpan={9}>LESSON PLANNER</SheetTitle>
          <Blank $edge="right" />
        </Row>
        {[3, 4].map((n) => (
          <Row key={n} $h={21}>
            <RowHead>{n}</RowHead>
            <Blank $edge="left" />
            <Blank colSpan={9} />
            <Blank $edge="right" />
          </Row>
        ))}
        <Row $h={32}>
          <RowHead>5</RowHead>
          <Blank $edge="left" />
          <FieldLabel>TEACHER NAME</FieldLabel>
          <Blank $fill colSpan={2} />
          <FieldLabel>TEACHER ID</FieldLabel>
          <Blank $fill />
          <FieldLabel>COURSE</FieldLabel>
          <Blank $fill />
          <FieldLabel>COURSE ID</FieldLabel>
          <Blank $fill />
          <Blank $edge="right" />
        </Row>
        {[6, 7].map((n) => (
          <Row key={n} $h={21}>
            <RowHead>{n}</RowHead>
            <Blank $edge="left" />
            <Blank colSpan={9} />
            <Blank $edge="right" />
          </Row>
        ))}
        <Row $h={55}>
          <RowHead>8</RowHead>
          <Blank $edge="left" />
          {HEADINGS.map((h, i) => <HeadCell key={h} $teal={i % 2 === 1}>{h}</HeadCell>)}
          <HeadCell $teal colSpan={2}>NOTES</HeadCell>
          <HeadEnd $edge="right" />
        </Row>
        {LESSONS.map(([date, goal, materials, activity, assessment, assignment, note], i) => (
          <Row key={date} $h={54} $band={i % 2 === 1}>
            <RowHead>{i + 9}</RowHead>
            <Blank $edge="left" />
            <Cell $kind="date">{date}</Cell>
            <Cell $kind="center">dddd</Cell>
            <Cell>{goal}</Cell>
            <Cell>{materials}</Cell>
            <Cell>{activity}</Cell>
            <Cell>{assessment}</Cell>
            <Cell>{assignment}</Cell>
            <Cell $kind="note" colSpan={2}>{note}</Cell>
            <Blank $edge="right" />
          </Row>
        ))}
        <Row $h={54}>
          <RowHead />
          <Blank $edge="left" />
          {HEADINGS.map((h) => <Cell key={h} />)}
          <Cell colSpan={2} />
          <Blank $edge="right" />
        </Row>
      </tbody>
    </Grid>
  </SheetArea>
);

export default function App() {
  return (
    <Window>
      <GlobalStyle />
      <TitleBar>
        <QuickAccess>
          <PlainButton $w={42} aria-label="Save"><SaveIcon /></PlainButton>
          <PlainButton $w={42} aria-label="Undo"><UndoIcon /></PlainButton>
          <PlainButton $w={10} aria-label="Undo history"><Chevron color="#fff" /></PlainButton>
          <PlainButton $w={48} $dim aria-label="Redo"><RedoIcon /></PlainButton>
          <PlainButton $w={10} $dim aria-label="Redo history"><Chevron color="#fff" /></PlainButton>
          <PlainButton $w={56} aria-label="Customize toolbar"><CustomizeIcon /></PlainButton>
        </QuickAccess>
        <DocTitle>{"Lesson_Planner_Template_b5df58221c.xlsx  -  Excel"}</DocTitle>
        <WindowActions>
          <SignIn>Sign in</SignIn>
          <WindowButton aria-label="Ribbon display options"><RibbonOptionsIcon /></WindowButton>
          <WindowButton aria-label="Minimize"><MinimizeIcon /></WindowButton>
          <WindowButton aria-label="Restore"><RestoreIcon /></WindowButton>
          <WindowButton aria-label="Close"><CloseIcon /></WindowButton>
        </WindowActions>
      </TitleBar>

      <TabBar>
        <RibbonTab $file>File</RibbonTab>
        <RibbonTab $active>Home</RibbonTab>
        {TABS.map((t) => <RibbonTab key={t}>{t}</RibbonTab>)}
        <TellMe><BulbIcon />Tell me what you want to do</TellMe>
        <Share><ShareIcon />Share<Chevron color="#fff" /></Share>
      </TabBar>

      <RibbonPanel />

      <FormulaBar>
        <BarBox $w={152}>
          <BarInput aria-label="Name box" defaultValue="A1" />
          <Caret />
        </BarBox>
        <Dots $m="10px 22px 0 20px" />
        <BarBox $w={164} $pad="0 18px">
          <Ico w={18} h={17}><path d="M1 1l16 15M17 1L1 16" stroke="#b9b9b9" strokeWidth="2.5" /></Ico>
          <Ico w={20} h={17}><path d="M1 9l6 6L19 1" stroke="#bdbdbd" strokeWidth="3.5" /></Ico>
          <Ico w={20} h={24}>
            <text x="1" y="18" fontSize="24" fontStyle="italic" fontWeight="700" fontFamily="Liberation Serif, serif" fill="#666">
              f<tspan fontSize="18">x</tspan>
            </text>
          </Ico>
        </BarBox>
        <BarBox $pad="0 6px">
          <BarInput aria-label="Formula" />
          <Ico w={12} h={9}><path d="M1 1.500l5 5 5-5" stroke="#777" strokeWidth="3.2" /></Ico>
        </BarBox>
      </FormulaBar>

      <Workspace>
        <Worksheet />
        <VScroll>
          <ScrollButton aria-label="Scroll up"><Arrow dir="up" /></ScrollButton>
          <Trough><Thumb $w={25} $h={111} /></Trough>
          <ScrollButton aria-label="Scroll down"><Arrow dir="down" /></ScrollButton>
        </VScroll>
      </Workspace>

      <SheetBar>
        <SheetNav>
          <PlainButton $w={40} aria-label="Previous sheet"><Arrow dir="left" color="#bdbdbd" /></PlainButton>
          <PlainButton $w={40} aria-label="Next sheet"><Arrow dir="right" color="#bdbdbd" /></PlainButton>
        </SheetNav>
        <SheetTab><span>LESSON PLANNER</span></SheetTab>
        <AddSheet aria-label="New sheet">
          <Ico w={24} h={24}>
            <circle cx="12" cy="12" r="10.5" stroke="#7d7d7d" strokeWidth="1.3" />
            <path d="M12 7v10M7 12h10" stroke="#6d6d6d" strokeWidth="2" />
          </Ico>
        </AddSheet>
        <HScroll>
          <Dots $m="0 20px 0 0" />
          <HTrack>
            <ScrollButton aria-label="Scroll left"><Arrow dir="left" /></ScrollButton>
            <Trough $row><Thumb $w={165} $h={25} /></Trough>
            <ScrollButton aria-label="Scroll right"><Arrow dir="right" /></ScrollButton>
          </HTrack>
        </HScroll>
      </SheetBar>

      <StatusBar>
        <span>Ready</span>
        <StatusButton aria-label="Record macro"><MacroIcon /></StatusButton>
        <StatusButton><AccessIcon />Accessibility: Investigate</StatusButton>
        <ViewButtons>
          <ViewButton $on aria-label="Normal view"><NormalViewIcon /></ViewButton>
          <ViewButton aria-label="Page layout view"><PageViewIcon /></ViewButton>
          <ViewButton aria-label="Page break preview"><BreakViewIcon /></ViewButton>
        </ViewButtons>
        <Zoom>
          <PlainButton $w={24} aria-label="Zoom out"><Ico w={12} h={2}><path d="M0 1h12" stroke="#333" strokeWidth="1.3" /></Ico></PlainButton>
          <ZoomRange type="range" aria-label="Zoom" min={10} max={190} defaultValue={73} />
          <PlainButton $w={24} aria-label="Zoom in"><Ico w={12} h={12}><path d="M0 6h12M6 0v12" stroke="#333" strokeWidth="1.3" /></Ico></PlainButton>
          <ZoomValue>73%</ZoomValue>
        </Zoom>
      </StatusBar>
      <BottomEdge />
    </Window>
  );
}
